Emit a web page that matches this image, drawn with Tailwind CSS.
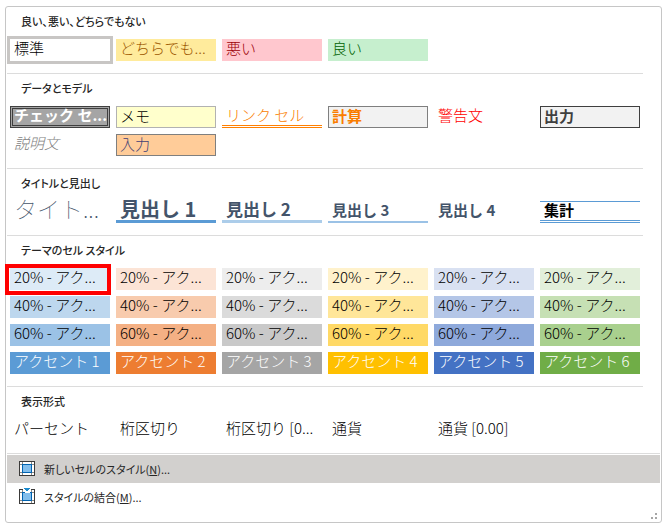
<!DOCTYPE html>
<html lang="ja">
<head>
  <meta charset="UTF-8" />
  <meta name="viewport" content="width=device-width, initial-scale=1.0">
  <title>セルのスタイル</title>
  <script src="https://cdn.jsdelivr.net/npm/@tailwindcss/browser@4"></script>
</head>
<body class="bg-white text-black font-['Noto_Sans_CJK_JP',sans-serif]">

  <div class="relative mt-1.5 ml-[5px] mr-1 px-px rounded-[3px] border border-[#c6c6c6] bg-white">

    <!-- Good / Bad / Neutral -->
    <section class="mr-[17px] px-[3px] pb-3 border-b border-[#dcdcdc]">
      <h2 class="h-8 pl-[11px] text-[11px] leading-[29px] font-medium text-[#262626] [font-feature-settings:'palt']">良い、悪い、どちらでもない</h2>
      <div class="grid grid-cols-6 gap-1.5 text-[15px] leading-[18px] font-light text-left whitespace-nowrap">
        <button class="h-[22px] pl-1 pb-1 text-left ring-3 ring-[#c8c6c4]">標準</button>
        <button class="h-[22px] pl-1 pb-1 text-left bg-[#ffeb9c] text-[#9c5700]">どちらでも...</button>
        <button class="h-[22px] pl-1 pb-1 text-left bg-[#ffc7ce] text-[#9c0006]">悪い</button>
        <button class="h-[22px] pl-1 pb-1 text-left bg-[#c6efce] text-[#006100]">良い</button>
      </div>
    </section>

    <!-- Data and Model -->
    <section class="mr-[17px] px-[3px] pb-3 border-b border-[#dcdcdc]">
      <h2 class="h-8 pl-[11px] text-[11px] leading-[29px] font-medium text-[#262626] [font-feature-settings:'palt']">データとモデル</h2>
      <div class="grid grid-cols-6 gap-1.5 text-[15px] leading-[18px] font-light whitespace-nowrap">
        <button class="h-[22px] pl-px pb-1 text-left leading-3 font-bold bg-[#a5a5a5] text-white border-3 border-double border-[#3f3f3f]">チェック セ...</button>
        <button class="h-[22px] pl-[3px] pb-[3px] text-left bg-[#ffffcc] border border-[#b2b2b2]">メモ</button>
        <button class="h-[22px] pl-1 pb-px text-left text-[#fa7d00] border-b-3 border-double border-[#ff8001]">リンク セル</button>
        <button class="h-[22px] pl-[3px] pb-[3px] text-left font-bold bg-[#f2f2f2] text-[#fa7d00] border border-[#7f7f7f]">計算</button>
        <button class="h-[22px] pl-1 pb-1 text-left text-[#ff0000]">警告文</button>
        <button class="h-[22px] pl-[3px] pb-[3px] text-left font-bold bg-[#f2f2f2] text-[#3f3f3f] border border-[#3f3f3f]">出力</button>
        <button class="h-[22px] pl-1 pb-1 text-left italic text-[#7f7f7f]">説明文</button>
        <button class="h-[22px] pl-[3px] pb-[3px] text-left bg-[#ffcc99] text-[#3f3f76] border border-[#7f7f7f]">入力</button>
      </div>
    </section>

    <!-- Titles and Headings -->
    <section class="mr-[17px] px-[3px] pb-3 border-b border-[#dcdcdc]">
      <h2 class="h-8 pl-[11px] text-[11px] leading-[29px] font-medium text-[#262626] [font-feature-settings:'palt']">タイトルと見出し</h2>
      <div class="grid grid-cols-6 gap-1.5 text-[15px] leading-[18px] font-bold whitespace-nowrap text-[#44546a]">
        <button class="h-[22px] pl-1 pb-2 text-left text-[23px] leading-3 font-thin">タイト...</button>
        <button class="h-[22px] pl-1 pb-1 text-left text-[20px] leading-3 border-b-3 border-[#5b9bd5]">見出し 1</button>
        <button class="h-[22px] pl-1 pb-1 text-left text-[17px] leading-3 border-b-3 border-[#accdea]">見出し 2</button>
        <button class="h-[22px] pl-1 pb-0.5 text-left border-b-2 border-[#9bc2e6]">見出し 3</button>
        <button class="h-[22px] pl-1 pb-1 text-left">見出し 4</button>
        <button class="h-[22px] pl-1 pb-0.5 text-left leading-3 text-black border-t border-b-3 border-[#5b9bd5] [border-bottom-style:double]">集計</button>
      </div>
    </section>

    <!-- Themed Cell Styles -->
    <section class="mr-[17px] px-[3px] pb-3 border-b border-[#dcdcdc]">
      <h2 class="h-8 pl-[11px] text-[11px] leading-[29px] font-medium text-[#262626] [font-feature-settings:'palt']">テーマのセル スタイル</h2>
      <div class="grid grid-cols-6 gap-1.5 text-[15px] leading-[18px] font-light whitespace-nowrap">
        <button class="relative h-[22px] pl-1 pb-1 text-left bg-[#ddebf7]">20% - アク...<span class="absolute -top-1 -left-[5px] -right-px -bottom-[5px] border-4 border-[#ff0000]"></span></button>
        <button class="h-[22px] pl-1 pb-1 text-left bg-[#fce4d6]">20% - アク...</button>
        <button class="h-[22px] pl-1 pb-1 text-left bg-[#ededed]">20% - アク...</button>
        <button class="h-[22px] pl-1 pb-1 text-left bg-[#fff2cc]">20% - アク...</button>
        <button class="h-[22px] pl-1 pb-1 text-left bg-[#d9e1f2]">20% - アク...</button>
        <button class="h-[22px] pl-1 pb-1 text-left bg-[#e2efda]">20% - アク...</button>

        <button class="h-[22px] pl-1 pb-1 text-left bg-[#bdd7ee]">40% - アク...</button>
        <button class="h-[22px] pl-1 pb-1 text-left bg-[#f8cbad]">40% - アク...</button>
        <button class="h-[22px] pl-1 pb-1 text-left bg-[#dbdbdb]">40% - アク...</button>
        <button class="h-[22px] pl-1 pb-1 text-left bg-[#ffe699]">40% - アク...</button>
        <button class="h-[22px] pl-1 pb-1 text-left bg-[#b4c6e7]">40% - アク...</button>
        <button class="h-[22px] pl-1 pb-1 text-left bg-[#c6e0b4]">40% - アク...</button>

        <button class="h-[22px] pl-1 pb-1 text-left bg-[#9bc2e6]">60% - アク...</button>
        <button class="h-[22px] pl-1 pb-1 text-left bg-[#f4b084]">60% - アク...</button>
        <button class="h-[22px] pl-1 pb-1 text-left bg-[#c9c9c9]">60% - アク...</button>
        <button class="h-[22px] pl-1 pb-1 text-left bg-[#ffd966]">60% - アク...</button>
        <button class="h-[22px] pl-1 pb-1 text-left bg-[#8ea9db]">60% - アク...</button>
        <button class="h-[22px] pl-1 pb-1 text-left bg-[#a9d08e]">60% - アク...</button>

        <button class="h-[22px] pl-1 pb-1 text-left text-white bg-[#5b9bd5]">アクセント 1</button>
        <button class="h-[22px] pl-1 pb-1 text-left text-white bg-[#ed7d31]">アクセント 2</button>
        <button class="h-[22px] pl-1 pb-1 text-left text-white bg-[#a5a5a5]">アクセント 3</button>
        <button class="h-[22px] pl-1 pb-1 text-left text-white bg-[#ffc000]">アクセント 4</button>
        <button class="h-[22px] pl-1 pb-1 text-left text-white bg-[#4472c4]">アクセント 5</button>
        <button class="h-[22px] pl-1 pb-1 text-left text-white bg-[#70ad47]">アクセント 6</button>
      </div>
    </section>

    <!-- Number Format -->
    <section class="pl-[3px] pr-5 pb-3 border-b border-[#dcdcdc]">
      <h2 class="h-8 pl-[11px] text-[11px] leading-[29px] font-medium text-[#262626] [font-feature-settings:'palt']">表示形式</h2>
      <div class="grid grid-cols-6 gap-1.5 text-[15px] leading-[18px] font-light whitespace-nowrap">
        <button class="h-[22px] pl-1 pb-1 text-left">パーセント</button>
        <button class="h-[22px] pl-1 pb-1 text-left">桁区切り</button>
        <button class="h-[22px] pl-1 pb-1 text-left">桁区切り [0...</button>
        <button class="h-[22px] pl-1 pb-1 text-left">通貨</button>
        <button class="h-[22px] pl-1 pb-1 text-left">通貨 [0.00]</button>
      </div>
    </section>

    <!-- Commands -->
    <div class="pt-px pb-[11px] text-[11px] text-[#262626] [font-feature-settings:'palt']">
      <button class="flex items-center w-full h-7 pl-3 gap-[9px] bg-[#d2d0ce]">
        <svg class="w-4 h-4" viewBox="0 0 16 16" shape-rendering="crispEdges">
          <rect x="0.5" y="0.5" width="15" height="14" fill="#fff" stroke="#3b3a39" />
          <path d="M3.5 1v13M12.5 1v13M1 3.5h14M1 11.5h14" stroke="#8a8886" fill="none" />
          <rect x="3.5" y="3.5" width="9" height="8" fill="#83beec" stroke="#0063b1" />
        </svg>
        <span>新しいセルのスタイル(<u>N</u>)...</span>
      </button>
      <button class="flex items-center w-full h-7 pl-3 gap-[9px]">
        <svg class="w-4 h-4 overflow-visible" viewBox="0 0 16 16" shape-rendering="crispEdges">
          <rect x="0.5" y="0.5" width="15" height="14" fill="#fff" stroke="#3b3a39" />
          <path d="M3.5 1v13M12.5 1v13M1 3.5h14M1 11.5h14" stroke="#8a8886" fill="none" />
          <rect x="3.5" y="3.5" width="9" height="8" fill="#83beec" stroke="#0063b1" />
          <path d="M4 -1h8v3l-2 2h-4l-2-2z" fill="#fff" />
          <path d="M5 -1h6v1h-1v1h-1v1h-2v-1h-1v-1h-1z" fill="#1e8bcd" />
        </svg>
        <span>スタイルの結合(<u>M</u>)...</span>
      </button>
    </div>

    <!-- Resize grip -->
    <svg class="absolute right-1 bottom-[3px] w-1.5 h-1.5" viewBox="0 0 6 6" fill="#a6a6a6" shape-rendering="crispEdges">
      <rect x="4" y="0" width="2" height="2" />
      <rect x="0" y="4" width="2" height="2" />
      <rect x="4" y="4" width="2" height="2" />
    </svg>
  </div>

</body>
</html>
